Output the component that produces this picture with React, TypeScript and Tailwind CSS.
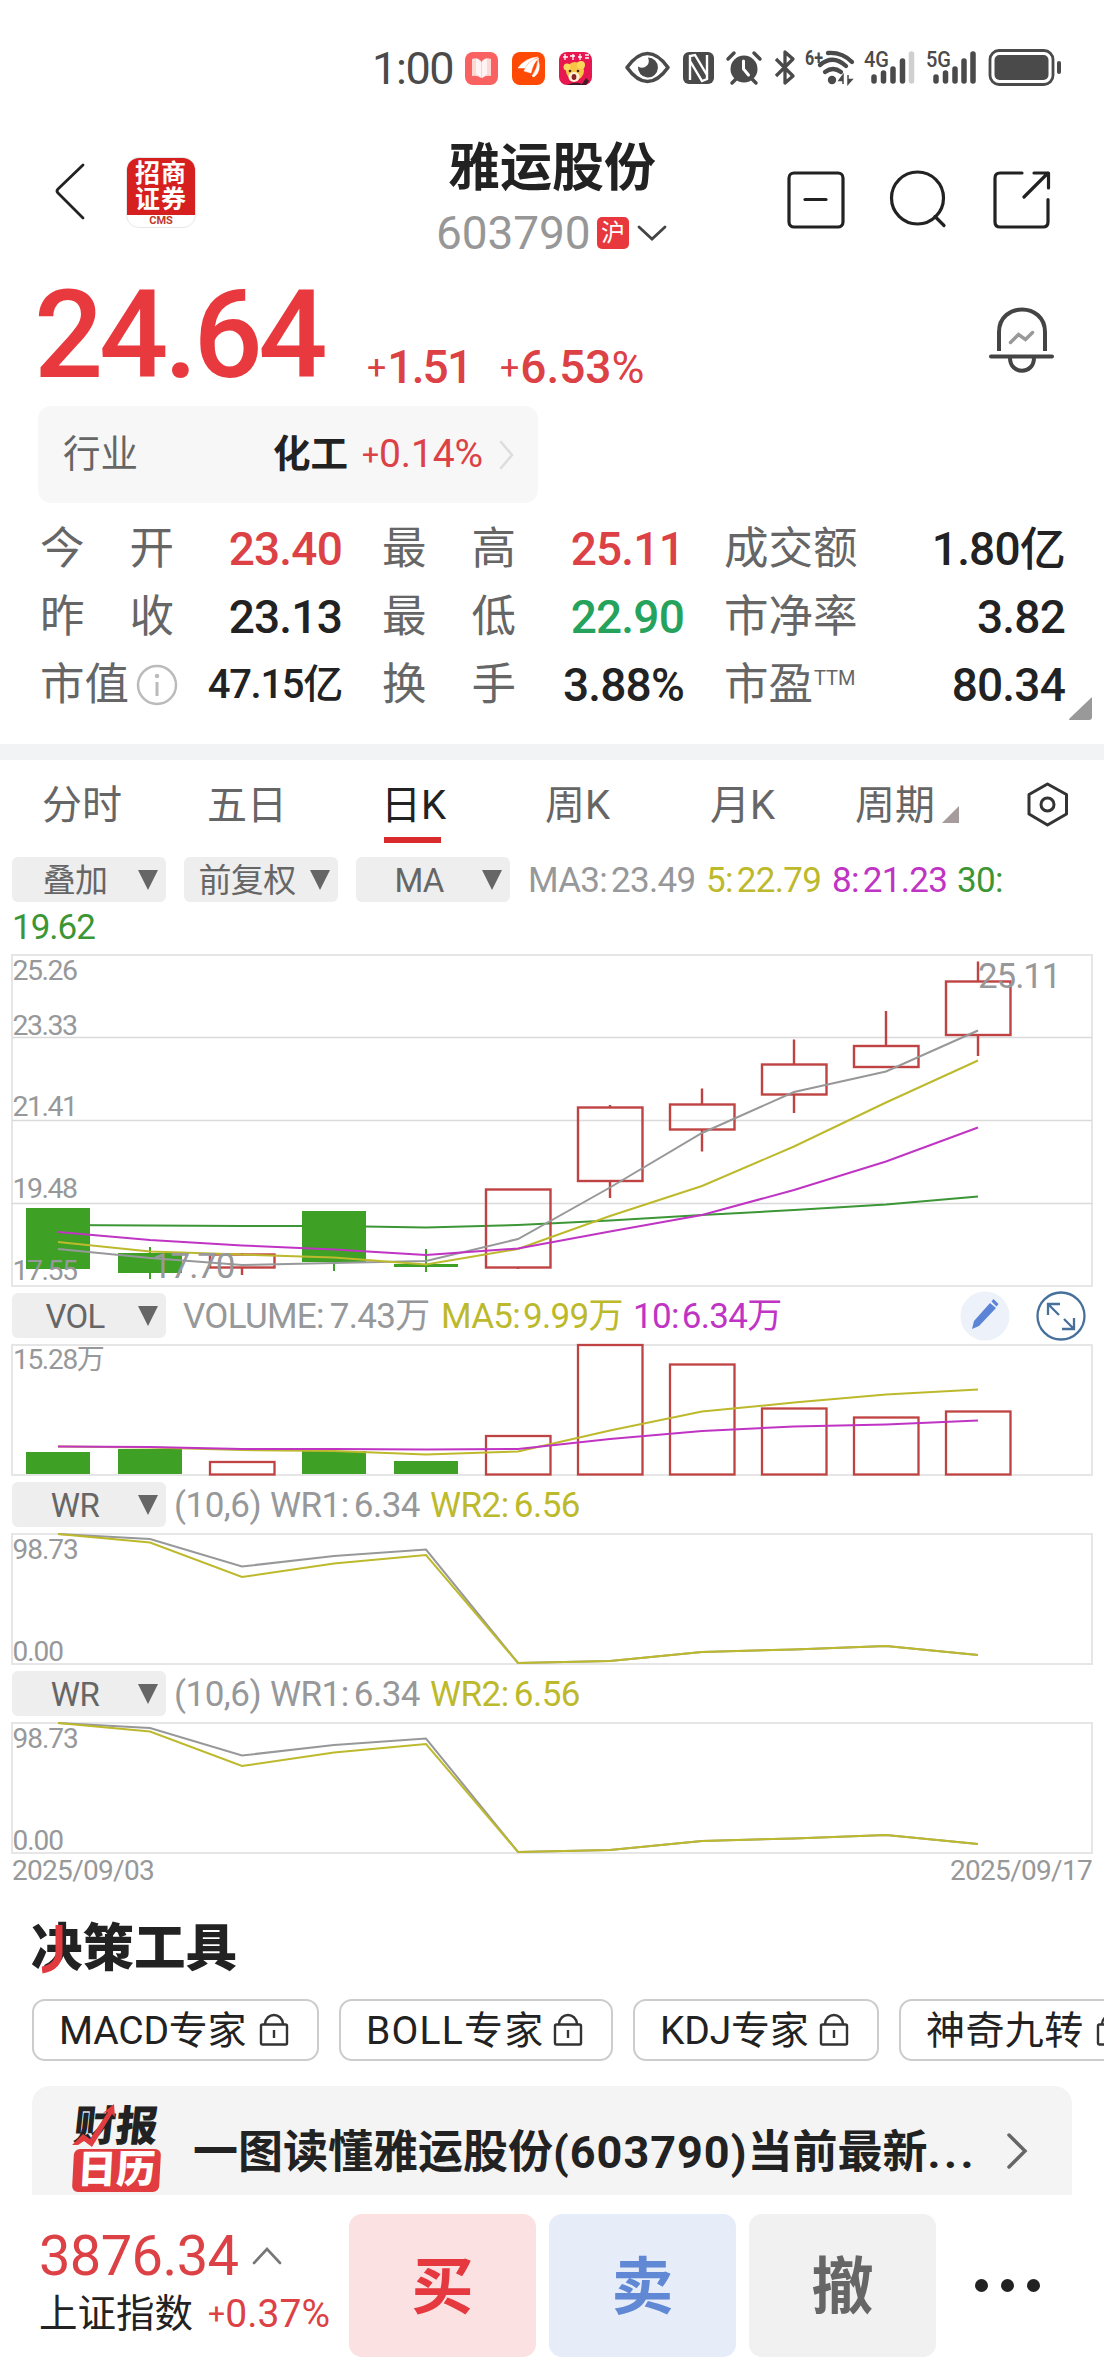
const GREY = "#97989a";
const YELLOW = "#bdb92c";
const MAGENTA = "#c034c4";
const GREEN = "#3c9636";
const UP = "#bf4342";
const DOWN = "#3ea126";

// x centre of each trading day
const days = [58, 150, 242, 334, 426, 518, 610, 702, 794, 886, 978];

const candles = [
  { up: false, top: 1208, bottom: 1269, high: 1208, low: 1269 },
  { up: false, top: 1253, bottom: 1273, high: 1247, low: 1279 },
  { up: true, top: 1254.5, bottom: 1267.5, high: 1253, low: 1275 },
  { up: false, top: 1211, bottom: 1262, high: 1211, low: 1271 },
  { up: false, top: 1264, bottom: 1267, high: 1249, low: 1272 },
  { up: true, top: 1189.5, bottom: 1267.5, high: 1189, low: 1269 },
  { up: true, top: 1107.5, bottom: 1181, high: 1105, low: 1198 },
  { up: true, top: 1104.5, bottom: 1129.5, high: 1088.5, low: 1151.5 },
  { up: true, top: 1064.5, bottom: 1094.5, high: 1039.5, low: 1113 },
  { up: true, top: 1046, bottom: 1067, high: 1011, low: 1067 },
  { up: true, top: 981.5, bottom: 1035, high: 961.5, low: 1056 },
];

const priceLines = [
  { color: GREEN, ys: [1225, 1225.5, 1226, 1226, 1227.5, 1225, 1220.5, 1215, 1210, 1204.5, 1196.5] },
  { color: GREY, ys: [1249, 1258, 1265, 1263, 1261, 1239, 1187.5, 1133, 1092, 1071.5, 1030.5] },
  { color: YELLOW, ys: [1242, 1251.5, 1254.5, 1257.5, 1264.5, 1249, 1216, 1186, 1146.5, 1102.5, 1060.5] },
  { color: MAGENTA, ys: [1232, 1240, 1245.5, 1249.5, 1255, 1248.5, 1231.5, 1215, 1190, 1161.5, 1127.5] },
];

const volumes = [
  { up: false, top: 1452 },
  { up: false, top: 1449 },
  { up: true, top: 1462 },
  { up: false, top: 1451 },
  { up: false, top: 1461 },
  { up: true, top: 1436 },
  { up: true, top: 1345 },
  { up: true, top: 1364.5 },
  { up: true, top: 1408.5 },
  { up: true, top: 1417.5 },
  { up: true, top: 1411.5 },
];

const volumeLines = [
  { color: YELLOW, ys: [1446.5, 1447.5, 1450, 1451, 1454.5, 1451.5, 1430.5, 1411.5, 1402.5, 1394.5, 1389.5] },
  { color: MAGENTA, ys: [1446.5, 1447, 1449, 1449, 1449.5, 1449, 1439, 1431, 1426.5, 1424.5, 1420.5] },
];

const wrLines = [
  { color: GREY, ys: [0, 5, 32.5, 22, 15.5, 129, 127, 118, 115.5, 112, 121] },
  { color: YELLOW, ys: [0, 8.5, 43, 29.5, 21, 129, 127, 118, 115.5, 112, 121] },
];

const stats = [
  [
    { label: ["今", "开"], value: "23.40", color: "text-[#db4145]" },
    { label: ["最", "高"], value: "25.11", color: "text-[#db4145]" },
    { label: ["成交额"], value: "1.80亿", color: "text-[#222]" },
  ],
  [
    { label: ["昨", "收"], value: "23.13", color: "text-[#222]" },
    { label: ["最", "低"], value: "22.90", color: "text-[#25a35c]" },
    { label: ["市净率"], value: "3.82", color: "text-[#222]" },
  ],
  [
    { label: ["市值"], value: "47.15亿", color: "text-[#222]", info: true, small: true },
    { label: ["换", "手"], value: "3.88%", color: "text-[#222]" },
    { label: ["市盈"], value: "80.34", color: "text-[#222]", ttm: true },
  ],
];

const tools = [
  { name: "MACD专家", box: "w-[287px]", tracking: "tracking-[-0.2px]" },
  { name: "BOLL专家", box: "w-[274px]", tracking: "tracking-[1.2px]" },
  { name: "KDJ专家", box: "w-[246px]", tracking: "tracking-[-0.2px]" },
  { name: "神奇九转", box: "w-[257px]", tracking: "tracking-[0.4px]" },
];

function toPoints(ys: number[]) {
  return ys.map((y, i) => `${days[i]},${y}`).join(" ");
}

function Lines({ lines }: { lines: { color: string; ys: number[] }[] }) {
  return (
    <>
      {lines.map((l, i) => (
        <polyline key={i} points={toPoints(l.ys)} fill="none" stroke={l.color} strokeWidth="2" />
      ))}
    </>
  );
}

function StatusBar() {
  return (
    <div className="flex h-[130px] shrink-0 pl-[372px] pt-[46px]">
      <div className="w-[92px] text-[45px] leading-[46px] tracking-[-1.4px] text-[#4a4a4a]">1:00</div>
      <svg className="h-[44px] w-[640px]" viewBox="463 46 640 44">
        <rect x="464" y="52" width="33" height="33" rx="8" fill="#fa6261" />
        <path d="M471 59q6-2 9 2v17q-4-3-9-2zM490 59q-6-2-9 2v17q4-3 9-2z" fill="#fdd9d6" />
        <path d="M475 58l5 4 6-4v16l-5 4-6-4z" fill="#fff" opacity=".7" />
        <rect x="511" y="52" width="33" height="33" rx="8" fill="#fe4a04" />
        <path d="M517 68q7-10 20-11-10 4-13 11zM523 71q4-11 15-13-6 5-8 15zM531 76q6-8 6-17 4 12-4 18z" fill="#fff" stroke="#fff" strokeWidth=".5" />
        <rect x="558" y="52" width="33" height="33" rx="8" fill="#e8174f" />
        <path d="M562 57h5M564 54v6M569 56h5M572 54v6M577 57h4M579 54v6M584 55h4M584 58h4" stroke="#fff" strokeWidth="1.3" />
        <circle cx="574" cy="71" r="9" fill="#f8c545" />
        <circle cx="566" cy="67" r="3.5" fill="#fbd75d" />
        <circle cx="580" cy="65" r="4" fill="#fbd75d" />
        <ellipse cx="573" cy="77" rx="5.5" ry="5" fill="#fff0d8" />
        <circle cx="569" cy="71" r="1.3" fill="#4b2317" />
        <circle cx="577" cy="71" r="1.3" fill="#4b2317" />
        <ellipse cx="573" cy="77" rx="2.4" ry="3" fill="#8a2424" />
        <path d="M566 85q8-4 15-1l4-6 3 3-3 4z" fill="#3e1c28" />
        {/* eye */}
        <path d="M626 67.500q10-14 20.500-14t20.500 14q-10 14-20.500 14t-20.500-14z" fill="none" stroke="#4a4a4a" strokeWidth="3.600" strokeLinejoin="round" />
        <path d="M647 57.500a10 10 0 1 1-10 9q5 3 9-1 3-3 1-8z" fill="#4a4a4a" />
        {/* nfc */}
        <rect x="682" y="52" width="31" height="32" rx="6" fill="#4a4a4a" />
        <path d="M689 80V56l5-1 12 20V61M689 80V59M706 55v24l-5 2-12-20" fill="none" stroke="#fff" strokeWidth="2.400" />
        {/* alarm */}
        <circle cx="743" cy="69" r="13.500" fill="#4a4a4a" />
        <path d="M727 59l6-6M759 59l-6-6M735 79l-4 4M751 79l4 4" stroke="#4a4a4a" strokeWidth="3.500" strokeLinecap="round" />
        <path d="M742.500 61v8l5 6" fill="none" stroke="#fff" strokeWidth="3" strokeLinecap="round" />
        {/* bluetooth */}
        <path d="M775 59l17 17-8 7V52l8 7-17 17" fill="none" stroke="#4a4a4a" strokeWidth="3.300" strokeLinejoin="round" />
        {/* wifi */}
        <text x="804" y="65" fontSize="20" fontWeight="700" fill="#4a4a4a" textLength="18" lengthAdjust="spacingAndGlyphs">6+</text>
        <g fill="none" stroke="#4a4a4a" strokeWidth="4.300" strokeLinecap="round">
          <path d="M827 53q14-1 24 9" />
          <path d="M819 65q13-11 26 1" />
          <path d="M824 72q8-6 16 0" />
        </g>
        <circle cx="831" cy="80" r="4.200" fill="#4a4a4a" />
        <path d="M842 84V75l-4 5.500h4M847 75v9l4-4.500h-4" fill="#4a4a4a" stroke="#4a4a4a" strokeWidth="1.500" />
        {/* signal */}
        <text x="863" y="67" fontSize="22" fontWeight="500" fill="#4a4a4a" textLength="25" lengthAdjust="spacingAndGlyphs">4G</text>
        <g stroke="#4a4a4a" strokeWidth="5.500" strokeLinecap="round">
          <path d="M873 77v4M882.500 73v8M892 69v12M901.500 61v20" />
          <path d="M910.500 54v27" stroke="#cfcfcf" />
        </g>
        <text x="925" y="67" fontSize="22" fontWeight="500" fill="#4a4a4a" textLength="25" lengthAdjust="spacingAndGlyphs">5G</text>
        <path d="M935 77v4M944.500 73v8M954 69v12M963 61v20M972 54v27" stroke="#4a4a4a" strokeWidth="5.500" strokeLinecap="round" />
        {/* battery */}
        <rect x="989" y="50.500" width="63" height="34" rx="9" fill="none" stroke="#4a4a4a" strokeWidth="2.800" />
        <rect x="993.500" y="55" width="54" height="25" rx="5" fill="#4a4a4a" />
        <path d="M1058 63v9" stroke="#4a4a4a" strokeWidth="4" strokeLinecap="round" />
      </svg>
    </div>
  );
}

function Header() {
  return (
    <header className="flex h-[140px] shrink-0">
      <svg className="mt-[30px] ml-[52px] h-[62px] w-[36px]" viewBox="52 160 36 62" fill="none" stroke="#222" strokeWidth="2.800" strokeLinecap="round" strokeLinejoin="round">
        <path d="M83 165L58 189q-2 2 0 4l25 25" />
      </svg>
      <div className="mt-[27px] ml-[38px] flex h-[71px] w-[70px] flex-col items-center overflow-hidden rounded-[13px] border border-gray-200 bg-white">
        <div className="flex h-[58px] w-full flex-col items-center bg-[#d6201f] pt-[3px] text-[25px] leading-[26px] font-bold tracking-[1px] text-white">
          <span>招商</span>
          <span>证券</span>
        </div>
        <span className="text-[11px] leading-[12px] font-bold text-[#c03a2c]">CMS</span>
      </div>
      <div className="ml-[200px] flex w-[312px] flex-col items-center">
        <h1 className="mt-[13px] text-[52px] leading-[52px] font-bold text-[#222]">雅运股份</h1>
        <div className="mt-[15px] flex items-center">
          <span className="w-[161px] text-[46px] leading-[46px] tracking-[-0.100px] text-[#979797]">603790</span>
          <span className="flex h-[32px] w-[32px] items-center justify-center rounded-[5px] bg-[#e8383d] text-[24px] leading-none text-white">沪</span>
          <svg className="ml-[7px] h-[18px] w-[32px]" viewBox="0 0 32 18" fill="none" stroke="#444" strokeWidth="2.800" strokeLinecap="round">
            <path d="M3 3l13 12L29 3" />
          </svg>
        </div>
      </div>
      <svg className="ml-[73px] mt-[36px] h-[66px] w-[272px]" viewBox="780 166 272 66" fill="none" stroke="#222" strokeWidth="3.200" strokeLinecap="round" strokeLinejoin="round">
        <rect x="788" y="173" width="54" height="54" rx="5" />
        <path d="M804 199.500h21" />
        <ellipse cx="916.500" cy="198" rx="26" ry="26" />
        <path d="M934 216.500l9 9" />
        <path d="M1021 173h-22q-5 0-5 5v44q0 5 5 5h43q5 0 5-5v-22.500M1033 173h14.500v15M1023 197l24-24" />
      </svg>
    </header>
  );
}

function PriceRow() {
  return (
    <div className="flex h-[136px] shrink-0 text-[#db4145]">
      <div className="ml-[34px] w-[333px] pt-[5px] text-[122px] leading-[122px] font-[500] tracking-[-4.400px] text-[#e8393e]">24.64</div>
      <div className="mt-[74px] flex h-[46px] w-[133px] items-center text-[46px] leading-none">
        <span className="mr-[1px] text-[34px]">+</span>
        <span className="font-[480] tracking-[-1.800px]">1.51</span>
      </div>
      <div className="mt-[74px] flex h-[46px] w-[200px] items-center text-[46px] leading-none">
        <span className="mr-[1px] text-[34px]">+</span>
        <span className="font-[480]">6.53</span>
        <span className="text-[45px]">%</span>
      </div>
      <svg className="mt-[34px] ml-[284px] h-[72px] w-[76px]" viewBox="982 304 76 72" fill="none" stroke="#444" strokeWidth="4">
        <path d="M997 351v-19c0-30 46-30 46 0v19" />
        <path d="M989 356.500h61" strokeLinecap="round" />
        <path d="M1008 358c0 17 24 17 24 0" />
        <path d="M1008.500 342.500l8-8 7 5 7-7" stroke="#999" strokeWidth="3.500" strokeLinecap="round" />
      </svg>
    </div>
  );
}

function Industry() {
  return (
    <div className="ml-[38px] flex h-[97px] w-[500px] shrink-0 items-center rounded-[13px] bg-[#f7f7f7] pl-[25px] text-[37.500px] leading-none">
      <span className="w-[210px] pt-[1px] text-[#666]">行业</span>
      <span className="w-[89px] pt-[1px] font-bold text-[#222]">化工</span>
      <span className="flex w-[136px] items-center text-[39px] font-[450] tracking-[-0.100px] text-[#db4145]">
        <span className="text-[30px]">+</span>0.14%
      </span>
      <svg className="h-[30px] w-[18px]" viewBox="0 0 18 30" fill="none" stroke="#ddd" strokeWidth="2.500" strokeLinecap="round">
        <path d="M3 2l11 13L3 28" />
      </svg>
    </div>
  );
}

function Stats() {
  return (
    <div className="relative mt-[12px] h-[229px] shrink-0 pl-[40px]">
      {stats.map((row, i) => (
        <div key={i} className="grid h-[68px] grid-cols-[302px_302px_341px] items-center gap-x-[40px]">
          {row.map((s) => (
            <div key={s.value} className="flex items-center justify-between">
              <div className="flex w-[134px] items-center justify-between text-[44.500px] leading-none whitespace-nowrap text-[#666]">
                {s.label.map((t) => (
                  <span key={t}>{t}</span>
                ))}
                {s.info && (
                  <svg className="mr-[-4px] h-[42px] w-[42px]" viewBox="0 0 42 42" fill="none" stroke="#bbb" strokeWidth="2.500">
                    <circle cx="21" cy="21" r="19" />
                    <path d="M21 18v14" strokeWidth="3" />
                    <circle cx="21" cy="12" r="1" />
                  </svg>
                )}
                {s.ttm && <span className="mb-[14px] w-[44px] text-[20px]">TTM</span>}
              </div>
              <span className={s.color}>
                {s.small ? (
                  <span className="text-[40px] leading-none font-[480] tracking-[-1.300px]">{s.value}</span>
                ) : (
                  <span className="text-[46px] leading-none font-[480] tracking-[-0.800px]">{s.value}</span>
                )}
              </span>
            </div>
          ))}
        </div>
      ))}
      <svg className="absolute top-[182px] left-[1069px] h-[23px] w-[23px]" viewBox="0 0 23 23">
        <path d="M23 0v20q0 3-3 3H1q-2 0 0-2z" fill="#999" />
      </svg>
    </div>
  );
}

function Tabs() {
  return (
    <div className="flex h-[97px] shrink-0 pl-[42px] pt-[23px] text-[40px] leading-[46px] text-[#666]">
      <span className="w-[165px]">分时</span>
      <span className="w-[174px]">五日</span>
      <span className="flex w-[164px] flex-col text-[#222]">
        日K
        <span className="mt-[8px] ml-[3px] h-[6px] w-[57px] bg-[#d92b2b]" />
      </span>
      <span className="w-[165px]">周K</span>
      <span className="w-[145px]">月K</span>
      <span className="w-[87px]">周期</span>
      <svg className="mt-[23px] h-[17px] w-[17px]" viewBox="0 0 17 17">
        <path d="M17 0v17H0z" fill="#a69c9c" />
      </svg>
      <svg className="ml-[66px] mt-[-3px] h-[48px] w-[44px]" viewBox="1024 780 44 48" fill="none" stroke="#333" strokeWidth="3" strokeLinejoin="round">
        <path d="M1046.500 784l19 10.500v19.500l-19 11-18.500-11v-19.500z" />
        <circle cx="1046.500" cy="804.500" r="6.500" />
      </svg>
    </div>
  );
}

function Chip({ label }: { label: string }) {
  return (
    <div className="flex h-[45px] w-[154px] shrink-0 items-center rounded-[6px] bg-[#eee] text-[#666]">
      <span className="w-[126px] pt-[2px] text-center text-[33px] leading-none whitespace-nowrap">{label}</span>
      <svg className="h-[20px] w-[20px]" viewBox="0 0 20 20">
        <path d="M0 0h20L10 20z" fill="#666" />
      </svg>
    </div>
  );
}

function Frame({ top, height }: { top: number; height: number }) {
  return <rect x="12" y={top} width="1080" height={height} fill="none" stroke="#e6e6e6" strokeWidth="2" />;
}

function PriceChart() {
  return (
    <svg className="block h-[343px] w-[1104px] shrink-0" viewBox="0 950 1104 343" fill={GREY}>
      <Frame top={955} height={331} />
      <path d="M12 1037.500h1080M12 1120.500h1080M12 1203.500h1080" stroke="#dadada" strokeWidth="1.300" />
      <Lines lines={priceLines.slice(0, 1)} />
      {candles.map((c, i) => {
        const x = days[i];
        return c.up ? (
          <g key={i} fill="none" stroke={UP} strokeWidth="2.400">
            <path d={`M${x} ${c.high}V${c.top}M${x} ${c.bottom}V${c.low}`} />
            <rect x={x - 32} y={c.top} width="64.500" height={c.bottom - c.top} />
          </g>
        ) : (
          <g key={i}>
            <path d={`M${x} ${c.high}V${c.low}`} stroke={DOWN} strokeWidth="2" />
            <rect x={x - 32} y={c.top} width="64" height={c.bottom - c.top} fill={DOWN} />
          </g>
        );
      })}
      <Lines lines={priceLines.slice(1)} />
      <g fontSize="28.500" letterSpacing="-1.5">
        <text x="12.500" y="979.500">25.26</text>
        <text x="12.500" y="1034.500">23.33</text>
        <text x="12.500" y="1116">21.41</text>
        <text x="12.500" y="1198">19.48</text>
        <text x="12.500" y="1280">17.55</text>
      </g>
      <g fontSize="35" letterSpacing="-1.1">
        <text x="152" y="1278">17.70</text>
        <text x="978" y="988">25.11</text>
      </g>
    </svg>
  );
}

function VolumeChart() {
  return (
    <svg className="block h-[144px] w-[1104px] shrink-0" viewBox="0 1338 1104 144" fill={GREY}>
      <Frame top={1345} height={130} />
      {volumes.map((v, i) =>
        v.up ? (
          <rect key={i} x={days[i] - 32} y={v.top} width="64.500" height={1474.5 - v.top} fill="none" stroke={UP} strokeWidth="2.300" />
        ) : (
          <rect key={i} x={days[i] - 32} y={v.top} width="64" height={1474 - v.top} fill={DOWN} />
        ),
      )}
      <Lines lines={volumeLines} />
      <text x="13" y="1369" fontSize="28" letterSpacing="-1.3">15.28万</text>
    </svg>
  );
}

function WrPanel() {
  return (
    <>
      <div className="flex h-[45px] shrink-0 items-center pl-[12px] text-[35px] leading-none tracking-[-0.500px]">
        <Chip label="WR" />
        <span className="ml-[8px] w-[96px] pt-[2px] text-[#97989a]">(10,6)</span>
        <span className="w-[160px] pt-[2px] text-[#97989a]">WR1:<span className="ml-[5px]">6.34</span></span>
        <span className="pt-[2px] text-[#bdb92c]">WR2:<span className="ml-[5px]">6.56</span></span>
      </div>
      <svg className="block h-[144px] w-[1104px] shrink-0" viewBox="0 -7 1104 144" fill={GREY}>
        <Frame top={0} height={130} />
        <Lines lines={wrLines} />
        <g fontSize="28" letterSpacing="-1">
          <text x="12.500" y="24.500">98.73</text>
          <text x="12.500" y="127">0.00</text>
        </g>
      </svg>
    </>
  );
}

function Lock() {
  return (
    <svg className="h-[34px] w-[30px] shrink-0" viewBox="0 0 30 34" fill="none" stroke="#333" strokeWidth="2.400">
      <rect x="2" y="11.500" width="26" height="20" rx="1.500" />
      <path d="M6 11c1-12 17-12 18 0M15 17v8" />
    </svg>
  );
}

function Tools() {
  return (
    <div className="h-[136px] shrink-0 overflow-hidden">
      <div className="flex w-[1180px] gap-[20px] pl-[32px]">
        {tools.map((t) => (
          <div key={t.name} className={`flex h-[62px] shrink-0 items-center justify-between rounded-[13px] border-2 border-[#ccc] pr-[28px] pl-[25px] ${t.box}`}>
            <span className={`pt-[2px] text-[39px] leading-none whitespace-nowrap text-[#222] ${t.tracking}`}>{t.name}</span>
            <Lock />
          </div>
        ))}
      </div>
    </div>
  );
}

function ReportCard() {
  return (
    <div className="mt-[-49px] ml-[32px] flex h-[109px] w-[1040px] shrink-0 items-center overflow-hidden rounded-t-[18px] bg-[#f4f4f4] pl-[36px]">
      <div className="relative mt-[18px] flex h-[90px] w-[96px] shrink-0 flex-col items-center">
        <span className="-skew-x-6 text-[42px] leading-[44px] font-black text-[#222]">财报</span>
        <span className="flex h-[43px] w-[87px] -skew-x-3 items-center justify-center rounded-[6px] bg-[#e13c40] text-[39px] leading-none font-black text-white">日历</span>
        <svg className="absolute top-[-1px] left-[4px] h-[44px] w-[46px]" viewBox="0 0 46 44">
          <path d="M0 41l11-11 7 5L36 8l-5 1 11-9 1 13-3-3-20 33-8-6-6 4z" fill="#e13c40" />
        </svg>
      </div>
      <div className="mt-[24px] ml-[29px] flex w-[781px] text-[45px] leading-[50px] font-bold whitespace-nowrap text-[#222]">
        <span>一图读懂雅运股份</span>
        <span className="w-[198px] tracking-[1px]">(603790)</span>
        <span>当前最新</span>
        <span className="tracking-[3.500px]">...</span>
      </div>
      <svg className="mt-[20px] ml-[32px] h-[38px] w-[24px] shrink-0" viewBox="0 0 24 38" fill="none" stroke="#666" strokeWidth="3.500" strokeLinecap="round">
        <path d="M3 3l16 16L3 35" />
      </svg>
    </div>
  );
}

function BottomBar() {
  return (
    <footer className="flex h-[181px] shrink-0 pl-[39px] pt-[19px]">
      <div className="w-[310px] pt-[14px]">
        <div className="flex items-center text-[56px] leading-[56px] font-[430] tracking-[-0.600px] text-[#db4145]">
          <span className="w-[212px]">3876.34</span>
          <svg className="h-[20px] w-[32px]" viewBox="0 0 32 20" fill="none" stroke="#777" strokeWidth="2.600" strokeLinecap="round">
            <path d="M3 17L16 3l13 14" />
          </svg>
        </div>
        <div className="mt-[8px] flex items-center text-[38.500px] leading-[44px]">
          <span className="w-[169px] text-[#222]">上证指数</span>
          <span className="flex items-center text-[39px] font-[450] tracking-[0.100px] text-[#db4145]">
            <span className="text-[30px]">+</span>0.37%
          </span>
        </div>
      </div>
      <div className="flex h-[143px] gap-[13px] text-[62px] leading-none font-bold">
        <button className="w-[187px] rounded-[13px] bg-[#fce1e2] pt-[5px] text-[#e5393f]">买</button>
        <button className="w-[187px] rounded-[13px] bg-[#e6edf9] pt-[5px] text-[#6188d4]">卖</button>
        <button className="w-[187px] rounded-[13px] bg-[#f1f1f1] pt-[5px] text-[#666]">撤</button>
      </div>
      <div className="ml-[39px] flex h-[143px] items-center gap-[13px]">
        <span className="h-[13px] w-[13px] rounded-full bg-[#222]" />
        <span className="h-[13px] w-[13px] rounded-full bg-[#222]" />
        <span className="h-[13px] w-[13px] rounded-full bg-[#222]" />
      </div>
    </footer>
  );
}

export default function App() {
  return (
    <div className="flex h-[2376px] w-[1104px] flex-col overflow-hidden bg-white font-['Roboto','Noto_Sans_CJK_SC',sans-serif]">
      <StatusBar />
      <Header />
      <PriceRow />
      <Industry />
      <Stats />
      <div className="h-[16px] shrink-0 bg-[#f2f3f4]" />
      <Tabs />

      <div className="flex h-[45px] shrink-0 items-center pl-[12px] text-[35px] leading-none tracking-[-0.700px]">
        <Chip label="叠加" />
        <span className="w-[18px]" />
        <Chip label="前复权" />
        <span className="w-[18px]" />
        <Chip label="MA" />
        <span className="ml-[18px] w-[178px] pt-[2px] text-[#97989a]">MA3:<span className="ml-[4px]">23.49</span></span>
        <span className="w-[126px] pt-[2px] text-[#bdb92c]">5:<span className="ml-[4px]">22.79</span></span>
        <span className="w-[125px] pt-[2px] text-[#c034c4]">8:<span className="ml-[4px]">21.23</span></span>
        <span className="pt-[2px] text-[#3c9636]">30:</span>
      </div>
      <div className="h-[48px] shrink-0 pt-[8px] pl-[12px] text-[35px] leading-[36px] tracking-[-1px] text-[#3c9636]">19.62</div>
      <PriceChart />

      <div className="flex h-[45px] shrink-0 items-center pl-[12px] text-[35px] leading-none tracking-[-0.700px]">
        <Chip label="VOL" />
        <span className="ml-[17px] w-[258px] pt-[2px] text-[#97989a]">VOLUME:<span className="ml-[6px]">7.43万</span></span>
        <span className="w-[192px] pt-[2px] text-[#bdb92c]">MA5:<span className="ml-[3px]">9.99万</span></span>
        <span className="w-[327px] pt-[2px] text-[#c034c4]">10:<span className="ml-[3px]">6.34万</span></span>
        <svg className="h-[50px] w-[50px] shrink-0" viewBox="0 0 50 50">
          <circle cx="25" cy="25" r="24.500" fill="#ecf1fa" />
          <path d="M12 38l2-8L30 12l6 5-17 18zM31.500 10.500l2-2.500 5 5-2 2.500z" fill="#5b84d6" />
        </svg>
        <svg className="ml-[26px] h-[50px] w-[50px] shrink-0" viewBox="0 0 50 50" fill="none" stroke="#47709a" strokeWidth="2.300">
          <circle cx="25" cy="25" r="23.500" />
          <path d="M12 24V13h12M12 13l11 11M38 27v11H26M38 38L28 28" />
        </svg>
      </div>
      <VolumeChart />
      <WrPanel />
      <WrPanel />

      <div className="mt-[-3px] flex h-[28px] shrink-0 items-center justify-between px-[12px] text-[28px] leading-none tracking-[-0.700px] text-[#97989a]">
        <span>2025/09/03</span>
        <span>2025/09/17</span>
      </div>

      <div className="relative h-[114px] shrink-0 pt-[38px] pl-[31px]">
        <h2 className="text-[51.500px] leading-[52px] font-black text-[#222]">决策工具</h2>
        <svg className="absolute top-[40px] left-[42px] h-[50px] w-[24px]" viewBox="0 0 24 50" fill="none" stroke="#e0393e" strokeWidth="7">
          <path d="M17 0v27q0 15-17 18" />
        </svg>
      </div>
      <Tools />
      <ReportCard />
      <BottomBar />
    </div>
  );
}
